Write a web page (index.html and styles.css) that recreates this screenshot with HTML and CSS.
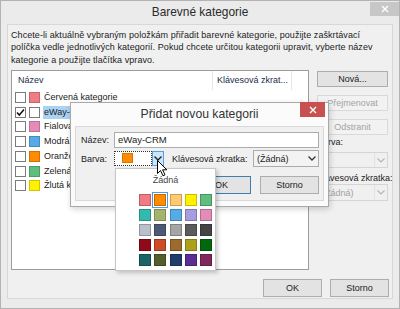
FILE: index.html
```html
<!DOCTYPE html>
<html lang="cs">
<head>
    <meta charset="UTF-8">
    <meta name="viewport" content="width=device-width, initial-scale=1.0">
    <title>Barevné kategorie</title>
    <link rel="stylesheet" href="styles.css">
</head>
<body>
    <div class="window">
        <div class="titlebar">
            <span></span>
            <span class="title">Barevné kategorie</span>
            <button class="close gray">
                <svg width="8" height="8" viewBox="0 0 8 8"><path d="M1 1L7 7M7 1L1 7" stroke="#fff" stroke-width="1.4"/></svg>
            </button>
        </div>

        <div class="panel">
            <p class="intro">Chcete-li aktuálně vybraným položkám přiřadit barevné kategorie, použijte zaškrtávací<br>políčka vedle jednotlivých kategorií. Pokud chcete určitou kategorii upravit, vyberte název<br>kategorie a použijte tlačítka vpravo.</p>

            <div class="main">
                <div class="listbox">
                    <div class="list-head">
                        <span class="col-name">Název</span>
                        <span class="col-key">Klávesová zkrat...</span>
                    </div>
                    <ul class="cats">
                        <li><span class="check"></span><span class="swatch c-red"></span><span class="name">Červená kategorie</span></li>
                        <li>
                            <span class="check">
                                <svg width="9" height="9" viewBox="0 0 9 9"><path d="M1 4.5L3.3 7L8 1.5" fill="none" stroke="#111" stroke-width="1.5"/></svg>
                            </span>
                            <span class="swatch c-none"></span><span class="name selected">eWay-CRM</span>
                        </li>
                        <li><span class="check"></span><span class="swatch c-pink"></span><span class="name">Fialová kategorie</span></li>
                        <li><span class="check"></span><span class="swatch c-blue"></span><span class="name">Modrá kategorie</span></li>
                        <li><span class="check"></span><span class="swatch c-orange"></span><span class="name">Oranžová kategorie</span></li>
                        <li><span class="check"></span><span class="swatch c-green"></span><span class="name">Zelená kategorie</span></li>
                        <li><span class="check"></span><span class="swatch c-yellow"></span><span class="name">Žlutá kategorie</span></li>
                    </ul>
                </div>

                <div class="side">
                    <button class="btn">Nová...</button>
                    <button class="btn" disabled>Přejmenovat</button>
                    <button class="btn" disabled>Odstranit</button>
                    <label class="side-label">Barva:</label>
                    <div class="combo disabled">
                        <span></span>
                        <span class="arrow"><svg width="8" height="5" viewBox="0 0 8 5"><path d="M0.5 0.5L4 4L7.5 0.5" fill="none" stroke="#b5b5b5" stroke-width="1.2"/></svg></span>
                    </div>
                    <label class="side-label second">Klávesová zkratka:</label>
                    <div class="combo disabled tall">
                        <span>(Žádná)</span>
                        <span class="arrow"><svg width="8" height="5" viewBox="0 0 8 5"><path d="M0.5 0.5L4 4L7.5 0.5" fill="none" stroke="#b5b5b5" stroke-width="1.2"/></svg></span>
                    </div>
                </div>
            </div>

            <div class="footer">
                <button class="btn wide">OK</button>
                <button class="btn wide">Storno</button>
            </div>
        </div>

        <!-- dialog nad oknem -->
        <div class="add-dialog">
            <div class="titlebar small">
                <span></span>
                <span class="title">Přidat novou kategorii</span>
                <button class="close red">
                    <svg width="8" height="8" viewBox="0 0 8 8"><path d="M1 1L7 7M7 1L1 7" stroke="#fff" stroke-width="1.4"/></svg>
                </button>
            </div>
            <div class="dlg-body">
                <div class="form-row">
                    <label class="form-label">Název:</label>
                    <div class="input">eWay-CRM</div>
                </div>
                <div class="form-row">
                    <label class="form-label">Barva:</label>
                    <div class="color-combo">
                        <span class="picked"><span class="picked-swatch"></span></span>
                        <span class="drop">
                            <svg width="8" height="5" viewBox="0 0 8 5"><path d="M0.5 0.5L4 4L7.5 0.5" fill="none" stroke="#222" stroke-width="1.4"/></svg>
                        </span>
                    </div>
                    <label class="form-label key">Klávesová zkratka:</label>
                    <div class="combo key-combo">
                        <span>(Žádná)</span>
                        <span class="arrow"><svg width="8" height="5" viewBox="0 0 8 5"><path d="M0.5 0.5L4 4L7.5 0.5" fill="none" stroke="#333" stroke-width="1.3"/></svg></span>
                    </div>
                </div>
                <div class="form-buttons">
                    <button class="btn wide default">OK</button>
                    <button class="btn wide">Storno</button>
                </div>
            </div>
        </div>

        <!-- rozbalená paleta barev -->
        <div class="color-popup">
            <div class="none-label">Žádná</div>
            <div class="palette">
                <span style="background:#f07b83"></span>
                <span class="active" style="background:#ff8c00"></span>
                <span style="background:#ffca70"></span>
                <span style="background:#fff100"></span>
                <span style="background:#5fbe7d"></span>

                <span style="background:#33baae"></span>
                <span style="background:#a4b36d"></span>
                <span style="background:#55abe5"></span>
                <span style="background:#a79cde"></span>
                <span style="background:#e48bb8"></span>

                <span style="background:#b9c0cb"></span>
                <span style="background:#4c5a75"></span>
                <span style="background:#a5a5a5"></span>
                <span style="background:#5c5c5c"></span>
                <span style="background:#444444"></span>

                <span style="background:#910a19"></span>
                <span style="background:#ce4b28"></span>
                <span style="background:#9c6a2c"></span>
                <span style="background:#aba11c"></span>
                <span style="background:#02680c"></span>

                <span style="background:#1c6363"></span>
                <span style="background:#545e2a"></span>
                <span style="background:#213d6b"></span>
                <span style="background:#5c2e91"></span>
                <span style="background:#80275d"></span>
            </div>
        </div>

        <svg class="cursor" width="11" height="17" viewBox="0 0 11 17">
            <path d="M0.5 0.5L0.5 13.5L3.5 10.5L6 15.8L8 14.8L5.6 9.8L9.8 9.8Z" fill="#fff" stroke="#000" stroke-width="1"/>
        </svg>
    </div>
</body>
</html>
```

FILE: styles.css
```css
* {
    box-sizing: border-box;
}
body {
    margin: 0;
    font-family: "Liberation Sans", Arial, sans-serif;
    font-size: 9px;
    color: #1b1b1b;
}
button {
    font: inherit;
    color: inherit;
    padding: 0;
}
ul {
    margin: 0;
    padding: 0;
    list-style: none;
}

/* hlavni okno */
.window {
    position: relative;
    width: 400px;
    height: 309px;
    background: #ebebeb;
    border: 1px solid #b3b3b3;
    overflow: hidden;
}
.titlebar {
    height: 23px;
    display: grid;
    grid-template-columns: 1fr auto 1fr;
}
.titlebar .title {
    font-size: 11.9px;
    line-height: 23px;
    color: #2a2a2a;
}
.close {
    justify-self: end;
    width: 29px;
    height: 14px;
    margin-top: 1px;
    border: 0;
    display: flex;
    align-items: center;
    justify-content: center;
}
.close.gray {
    background: #c7c7c7;
}
.close.red {
    background: #c75050;
    width: 25px;
    height: 15px;
    margin: -1px 3px 0 0;
}

.panel {
    height: 275px;
    margin: 0 6px;
    padding: 4px 3px 0;
    background: #f0f0f0;
    border: 1px solid #d8d8d8;
}
.intro {
    margin: 0 0 4px;
    line-height: 12.4px;
    letter-spacing: 0.07px;
}

.main {
    display: flex;
    gap: 8px;
}
.listbox {
    width: 298px;
    height: 200px;
    background: #fff;
    border: 1px solid #9c9c9c;
}
.list-head {
    display: flex;
    height: 19px;
    line-height: 19px;
    color: #1d2c4c;
}
.col-name {
    width: 201px;
    padding-left: 6px;
    border-right: 1px solid #e6e6e6;
}
.col-key {
    width: 79px;
    padding-left: 4px;
    border-right: 1px solid #e6e6e6;
}
.cats li {
    display: flex;
    align-items: center;
    height: 14.7px;
    padding-left: 3px;
}
.check {
    width: 11px;
    height: 11px;
    border: 1px solid #7a7a7a;
    background: #fff;
    display: flex;
    align-items: center;
    justify-content: center;
}
.swatch {
    width: 11px;
    height: 11px;
    margin: 0 3px 0 3px;
    border: 1px solid rgba(0,0,0,.18);
}
.name {
    padding: 0 1px;
    line-height: 13px;
    white-space: nowrap;
}
.name.selected {
    background: #a9d2f3;
}
.c-red { background: #f07b83; }
.c-none { background: #fff; border-color: #7a7a7a; }
.c-pink { background: #e48bb8; }
.c-blue { background: #55abe5; }
.c-orange { background: #ff8c00; }
.c-green { background: #5fbe7d; }
.c-yellow { background: #fff100; }

.side {
    width: 71px;
    display: flex;
    flex-direction: column;
    padding-top: 1px;
}
.btn {
    height: 16px;
    margin-bottom: 8px;
    background: #e3e3e3;
    border: 1px solid #adadad;
    text-align: center;
}
.btn:disabled {
    background: #f2f2f2;
    border-color: #d9d9d9;
    color: #a3a3a3;
}
.side-label {
    line-height: 12px;
    margin-top: -7px;
    white-space: nowrap;
}
.side-label.second {
    margin-top: 4px;
}
.combo {
    height: 16px;
    margin-top: 4px;
    display: flex;
    align-items: center;
    justify-content: space-between;
    padding-left: 4px;
    border: 1px solid #acacac;
    background: #fff;
}
.combo .arrow {
    width: 13px;
    height: 100%;
    display: flex;
    align-items: center;
    justify-content: center;
}
.combo.disabled {
    background: #f0f0f0;
    border-color: #d5d5d5;
    color: #a3a3a3;
}
.combo.disabled .arrow {
    border-left: 1px solid #e2e2e2;
}
.combo.tall {
    height: 17px;
    margin-top: 0;
}

.footer {
    display: flex;
    justify-content: flex-end;
    gap: 8px;
    margin-top: 9px;
}
.btn.wide {
    width: 59px;
    height: 18px;
    margin: 0;
}

/* dialog Pridat novou kategorii */
.add-dialog {
    position: absolute;
    left: 69px;
    top: 101px;
    width: 259px;
    height: 105px;
    background: #fbfbfb;
    border: 1px solid #a9a9a9;
    box-shadow: 1px 2px 6px rgba(0,0,0,.18);
}
.titlebar.small .title {
    font-size: 12.2px;
    color: #333;
}
.dlg-body {
    height: 75px;
    margin: 0 4px;
    padding: 5px 4px 0 5px;
    background: #f0f0f0;
    border: 1px solid #d9d9d9;
}
.form-row {
    display: flex;
    align-items: center;
    height: 16px;
    margin-bottom: 2px;
}
.form-row + .form-row {
    height: 17px;
}
.form-label {
    width: 33px;
}
.form-label.key {
    width: auto;
    margin: 0 auto 0 8px;
}
.input {
    flex: 1;
    height: 16px;
    line-height: 14px;
    padding-left: 3px;
    background: #fff;
    border: 1px solid #acacac;
    font-size: 9.5px;
}
.color-combo {
    width: 50px;
    height: 15px;
    display: flex;
}
.picked {
    flex: 1;
    padding: 1px 0 0 7px;
    background: #fff;
    border: 1px dotted #333;
}
.picked-swatch {
    display: block;
    width: 11px;
    height: 10px;
    background: #ff8c00;
    border: 1px solid rgba(0,0,0,.15);
}
.drop {
    width: 12px;
    background: #cde6f7;
    border: 1px solid #569de5;
    display: flex;
    align-items: center;
    justify-content: center;
}
.key-combo {
    width: 66px;
    height: 17px;
    margin: 0;
    padding-left: 3px;
    background: #f3f3f3;
}
.form-buttons {
    display: flex;
    justify-content: flex-end;
    gap: 9px;
    margin-top: 9px;
}
.btn.default {
    border-color: #3c7fb1;
}

/* paleta barev */
.color-popup {
    position: absolute;
    left: 114px;
    top: 167px;
    width: 101px;
    height: 103px;
    padding: 4px 0 0 23px;
    background: #fff;
    border: 1px solid #c6c6c6;
    box-shadow: 2px 2px 4px rgba(0,0,0,.2);
}
.none-label {
    margin-left: -23px;
    text-align: center;
    line-height: 14px;
    color: #444;
}
.palette {
    display: grid;
    grid-template-columns: repeat(5, 12px);
    column-gap: 3.3px;
    row-gap: 3px;
    margin-top: 7px;
}
.palette span {
    width: 12px;
    height: 12px;
    border: 1px solid rgba(0,0,0,.22);
}
.palette .active {
    outline: 1px solid #4a9ee0;
    outline-offset: 1px;
}

.cursor {
    position: absolute;
    left: 156px;
    top: 159px;
}
```
